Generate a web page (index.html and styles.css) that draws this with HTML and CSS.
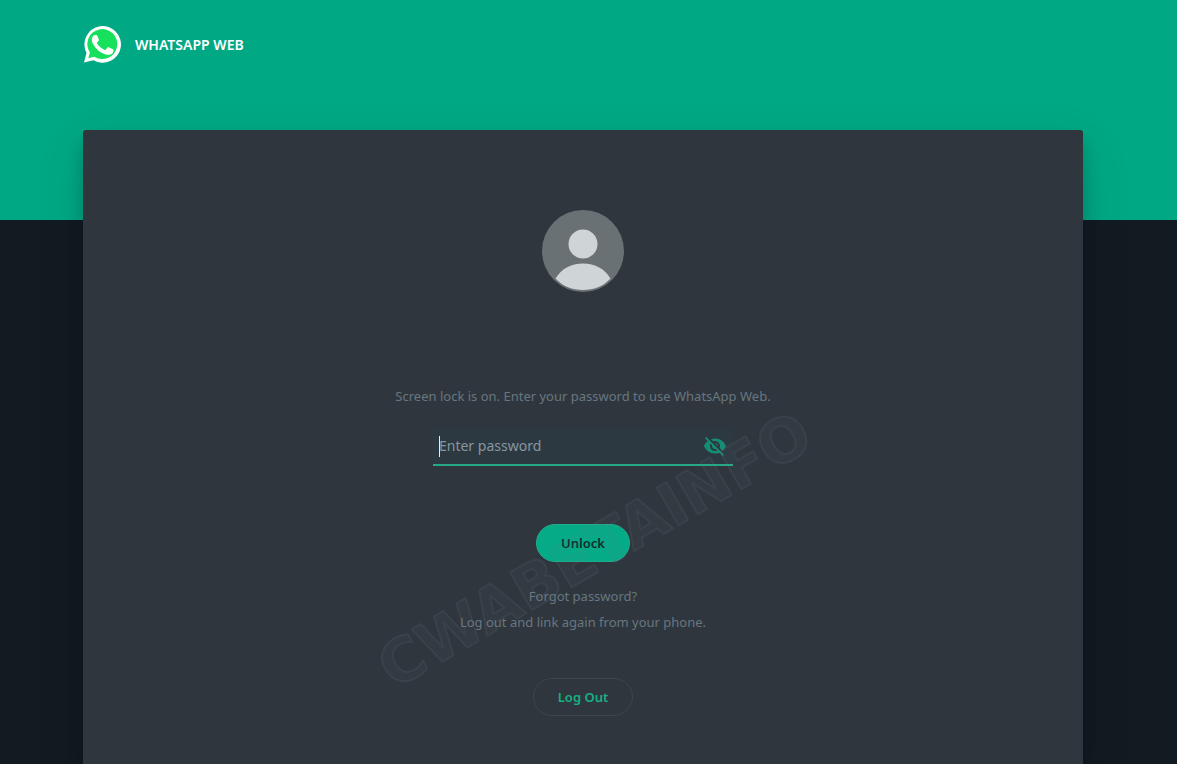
FILE: index.html
```html
<!DOCTYPE html>
<html lang="en">
<head>
    <meta charset="UTF-8">
    <meta name="viewport" content="width=device-width, initial-scale=1.0">
    <title>WhatsApp Web</title>
    <link rel="stylesheet" href="styles.css">
</head>
<body>

<div class="page">
    <header class="header">
        <svg class="logo" viewBox="0 0 38 38" aria-hidden="true">
            <path fill="#fff" d="M1 37.500 3.500 28A18.300 18.300 0 1 1 10.400 35.200Z"/>
            <path fill="#16e05c" d="M5.300 33.200 6.900 27.500A15 15 0 1 1 11.200 31.700Z"/>
            <path fill="#fff" d="M14.300 10.800c-.4-.9-.7-.9-1.200-.9h-1c-.4 0-1 .1-1.500.7-.5.600-1.800 1.800-1.800 4.400s1.900 5.100 2.200 5.400c.3.400 3.700 5.900 9.100 8 4.500 1.800 5.400 1.400 6.400 1.300 1-.1 3.200-1.300 3.600-2.500.4-1.300.4-2.300.3-2.500-.1-.3-.5-.4-1-.7l-3.700-1.700c-.5-.2-.9-.3-1.300.2-.3.600-1.400 1.800-1.700 2.200-.3.400-.6.400-1.200.1-.5-.3-2.200-.8-4.300-2.700-1.600-1.400-2.700-3.100-3-3.700-.3-.5 0-.8.2-1.100l.9-1c.3-.3.400-.5.500-.9.2-.4.100-.7 0-1Z"/>
        </svg>
        <span class="brand">WHATSAPP WEB</span>
    </header>

    <main class="card">
        <svg class="avatar" viewBox="0 0 82 82" aria-hidden="true">
            <circle cx="41" cy="41" r="41" fill="#6a7175"/>
            <circle cx="41" cy="34" r="14.500" fill="#cfd4d6"/>
            <path fill="#cfd4d6" d="M13.500 68.500C19 59 29 53.500 41 53.500S63 59 68.500 68.500C61 76.500 52 80 41 80S21 76.500 13.500 68.500Z"/>
        </svg>

        <form class="lock-form" onsubmit="return false">
            <label class="message" for="password">Screen lock is on. Enter your password to use WhatsApp Web.</label>
            <div class="field">
                <input type="password" id="password" placeholder="Enter password">
                <span class="caret"></span>
                <button type="button" class="toggle" aria-label="Show password" onclick="togglePassword()">
                    <svg viewBox="0 0 24 24" aria-hidden="true">
                        <path d="M12 7c2.760 0 5 2.240 5 5 0 .65-.13 1.260-.36 1.830l2.920 2.920c1.510-1.260 2.700-2.890 3.430-4.750-1.730-4.390-6-7.500-11-7.500-1.400 0-2.740.25-3.980.7l2.160 2.160C10.740 7.130 11.350 7 12 7zM2 4.270l2.280 2.280.46.46C3.080 8.300 1.780 10.020 1 12c1.730 4.390 6 7.500 11 7.500 1.550 0 3.030-.3 4.380-.84l.42.42L19.730 22 21 20.730 3.270 3 2 4.270zM7.530 9.800l1.550 1.550c-.05.21-.08.43-.08.65 0 1.660 1.340 3 3 3 .22 0 .44-.03.65-.08l1.550 1.550c-.67.33-1.410.53-2.200.53-2.760 0-5-2.240-5-5 0-.79.2-1.530.53-2.200zm4.310-.78l3.150 3.150.02-.16c0-1.660-1.340-3-3-3l-.17.01z"/>
                    </svg>
                </button>
            </div>
            <button type="submit" class="btn btn-primary">Unlock</button>
        </form>

        <div class="help">
            <p>Forgot password?</p>
            <p>Log out and link again from your phone.</p>
        </div>
        <button type="button" class="btn btn-outline">Log Out</button>

        <svg class="watermark" viewBox="0 0 480 320" aria-hidden="true">
            <text x="240" y="182" text-anchor="middle" transform="rotate(-30 240 160)">CWABETAINFO</text>
        </svg>
    </main>
</div>

<script>
    function togglePassword() {
        const input = document.getElementById('password');
        input.type = input.type === 'password' ? 'text' : 'password';
    }
</script>

</body>
</html>
```
FILE: styles.css
```css
* {
    box-sizing: border-box;
}
body {
    margin: 0;
    min-height: 100vh;
    background: linear-gradient(#00a884 220px, #111b21 220px);
    font-family: "Noto Sans", "Segoe UI", sans-serif;
    font-size: 13px;
    color: #667781;
}
.page {
    display: flex;
    flex-direction: column;
    align-items: center;
    min-height: 100vh;
    /* room for the scrollbar */
    padding-right: 11px;
}
.header {
    display: flex;
    align-items: center;
    gap: 14px;
    width: 100%;
    max-width: 1000px;
    height: 130px;
    padding-bottom: 42px;
}
.logo {
    width: 38px;
    height: 38px;
}
.brand {
    color: #fff;
    font-size: 14px;
    font-weight: 600;
}
.card {
    position: relative;
    flex: 1;
    display: flex;
    flex-direction: column;
    align-items: center;
    width: 100%;
    max-width: 1000px;
    padding: 80px 20px 48px;
    background-color: #30363d;
    border-radius: 3px 3px 0 0;
    box-shadow: 0 17px 50px rgba(11, 20, 26, 0.12), 0 12px 15px rgba(11, 20, 26, 0.2);
}
.avatar {
    width: 82px;
    height: 82px;
    margin-bottom: 94px;
}
.lock-form {
    display: flex;
    flex-direction: column;
    align-items: center;
}
.message {
    line-height: 20px;
}
.field {
    position: relative;
    display: flex;
    width: 300px;
    height: 38px;
    margin: 22px 0 58px;
    padding: 0 6px;
    background-color: #2d3941;
    border-bottom: 2px solid #26a884;
}
.field input {
    flex: 1;
    min-width: 0;
    padding: 0;
    border: 0;
    outline: 0;
    background: none;
    color: #e9edef;
    font-family: inherit;
    font-size: 14px;
    line-height: 20px;
}
.field input::placeholder {
    color: #8696a0;
    opacity: 1;
}
.caret {
    position: absolute;
    left: 6px;
    top: 8px;
    width: 1px;
    height: 21px;
    background-color: #e9edef;
}
.toggle {
    display: flex;
    align-items: center;
    padding: 0;
    border: 0;
    background: none;
    cursor: pointer;
}
.toggle svg {
    width: 24px;
    height: 24px;
    fill: #168c75;
}
.btn {
    height: 38px;
    padding: 0 24px;
    border: 1px solid transparent;
    border-radius: 19px;
    font-family: inherit;
    font-size: 13px;
    font-weight: 600;
    cursor: pointer;
}
.btn-primary {
    background-color: #04ab86;
    border-color: #21ad8c;
    color: #0f2f2d;
}
.btn-outline {
    background: none;
    border-color: #3d444b;
    color: #16b084;
}
.help {
    margin: 21px 0 43px;
    text-align: center;
}
.help p {
    margin: 0;
    line-height: 26px;
}
.watermark {
    position: absolute;
    top: 259px;
    left: 50%;
    width: 480px;
    height: 320px;
    margin-left: -229px;
    overflow: visible;
    pointer-events: none;
}
.watermark text {
    font-family: "DejaVu Sans", sans-serif;
    font-size: 60px;
    font-weight: bold;
    fill: rgba(120, 135, 145, 0.06);
    stroke: rgba(120, 135, 145, 0.12);
    stroke-width: 2px;
    stroke-linejoin: round;
}
```
